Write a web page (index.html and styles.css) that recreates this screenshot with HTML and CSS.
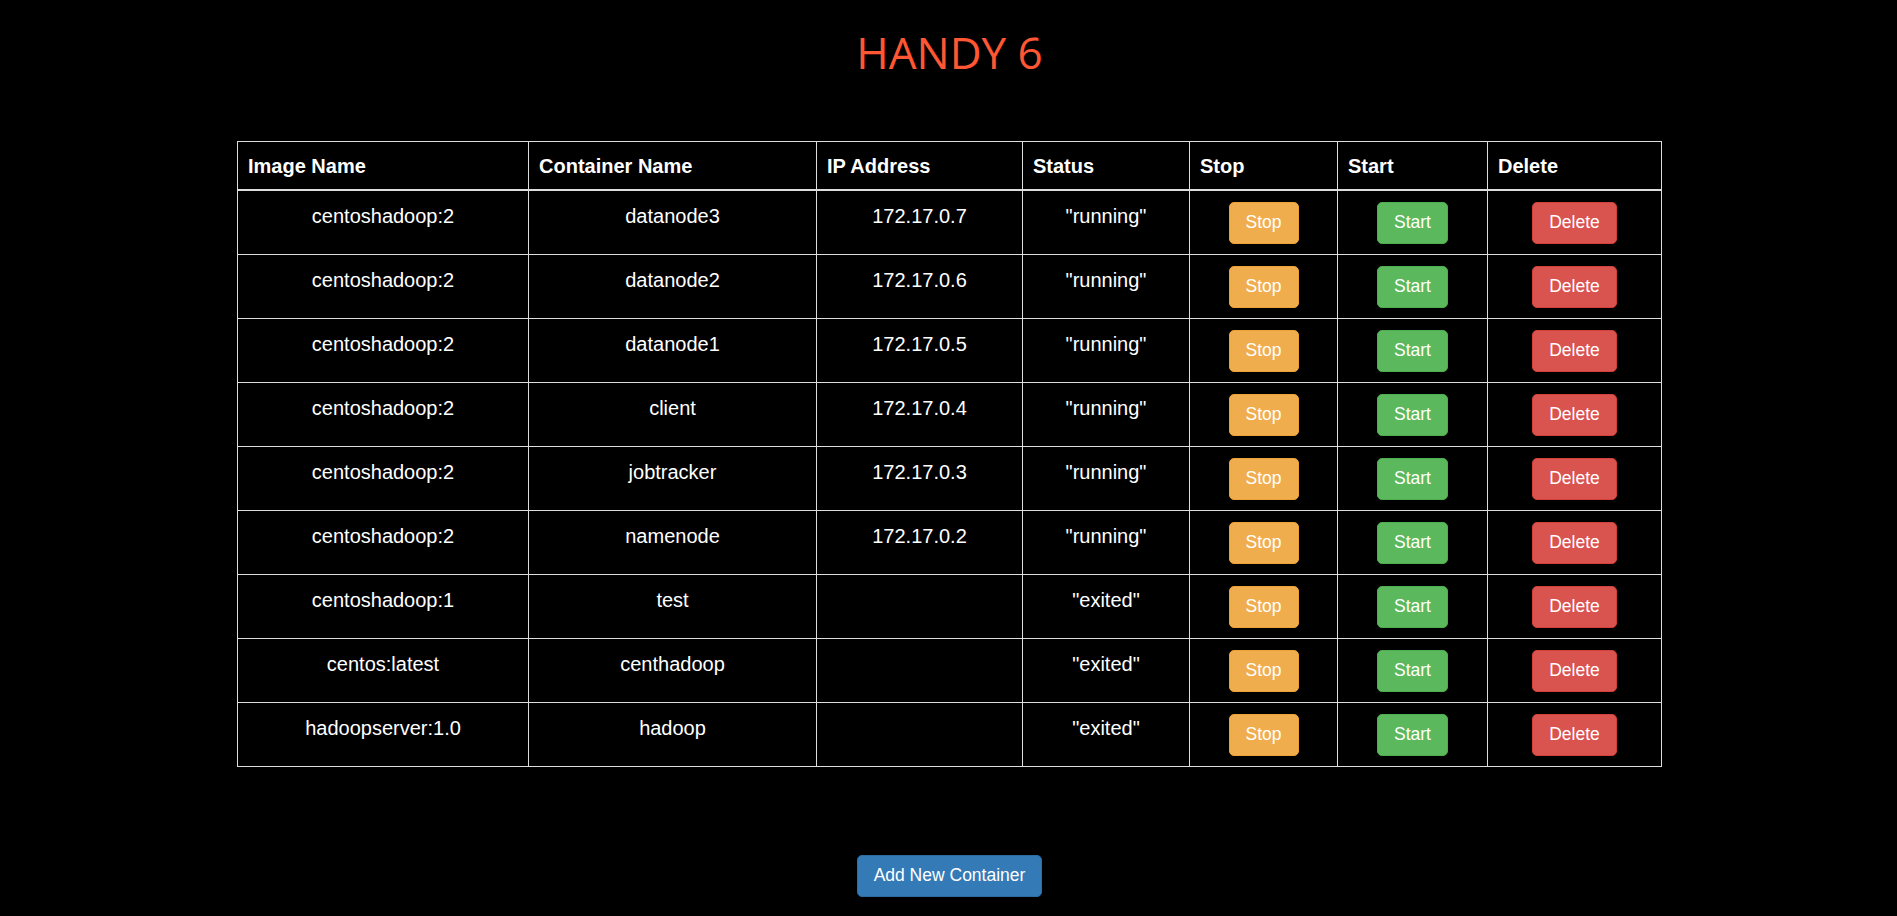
FILE: index.html
```html
<!DOCTYPE html>
<html lang="en">
<head>
<meta charset="utf-8">
<title>HANDY 6</title>
<link rel="stylesheet" href="styles.css">
</head>
<body>
<h1 class="title">HANDY 6</h1>
<table class="grid">
  <colgroup>
    <col class="c-image"><col class="c-name"><col class="c-ip"><col class="c-status"><col class="c-stop"><col class="c-start"><col class="c-delete">
  </colgroup>
  <thead>
    <tr><th>Image Name</th><th>Container Name</th><th>IP Address</th><th>Status</th><th>Stop</th><th>Start</th><th>Delete</th></tr>
  </thead>
  <tbody>
    <tr><td>centoshadoop:2</td><td>datanode3</td><td>172.17.0.7</td><td>"running"</td><td><button class="btn btn-warning">Stop</button></td><td><button class="btn btn-success">Start</button></td><td><button class="btn btn-danger">Delete</button></td></tr>
    <tr><td>centoshadoop:2</td><td>datanode2</td><td>172.17.0.6</td><td>"running"</td><td><button class="btn btn-warning">Stop</button></td><td><button class="btn btn-success">Start</button></td><td><button class="btn btn-danger">Delete</button></td></tr>
    <tr><td>centoshadoop:2</td><td>datanode1</td><td>172.17.0.5</td><td>"running"</td><td><button class="btn btn-warning">Stop</button></td><td><button class="btn btn-success">Start</button></td><td><button class="btn btn-danger">Delete</button></td></tr>
    <tr><td>centoshadoop:2</td><td>client</td><td>172.17.0.4</td><td>"running"</td><td><button class="btn btn-warning">Stop</button></td><td><button class="btn btn-success">Start</button></td><td><button class="btn btn-danger">Delete</button></td></tr>
    <tr><td>centoshadoop:2</td><td>jobtracker</td><td>172.17.0.3</td><td>"running"</td><td><button class="btn btn-warning">Stop</button></td><td><button class="btn btn-success">Start</button></td><td><button class="btn btn-danger">Delete</button></td></tr>
    <tr><td>centoshadoop:2</td><td>namenode</td><td>172.17.0.2</td><td>"running"</td><td><button class="btn btn-warning">Stop</button></td><td><button class="btn btn-success">Start</button></td><td><button class="btn btn-danger">Delete</button></td></tr>
    <tr><td>centoshadoop:1</td><td>test</td><td></td><td>"exited"</td><td><button class="btn btn-warning">Stop</button></td><td><button class="btn btn-success">Start</button></td><td><button class="btn btn-danger">Delete</button></td></tr>
    <tr><td>centos:latest</td><td>centhadoop</td><td></td><td>"exited"</td><td><button class="btn btn-warning">Stop</button></td><td><button class="btn btn-success">Start</button></td><td><button class="btn btn-danger">Delete</button></td></tr>
    <tr><td>hadoopserver:1.0</td><td>hadoop</td><td></td><td>"exited"</td><td><button class="btn btn-warning">Stop</button></td><td><button class="btn btn-success">Start</button></td><td><button class="btn btn-danger">Delete</button></td></tr>
  </tbody>
</table>
<div class="actions">
  <button class="btn btn-primary">Add New Container</button>
</div>
</body>
</html>
```
FILE: styles.css
```css
html, body {
  margin: 0;
  padding: 0;
  background: #000;
  color: #fff;
  font-family: "Liberation Sans", Arial, sans-serif;
}

body {
  padding-left: 2px;
}

.title {
  margin: 0;
  padding-top: 28px;
  text-align: center;
  font-family: "Open Sans", "Noto Sans", sans-serif;
  font-weight: 400;
  font-size: 44px;
  line-height: 48.4px;
  color: #ff5733;
}

.grid {
  width: 1424px;
  margin: 65px auto 0;
  border-collapse: collapse;
  table-layout: fixed;
  font-size: 20px;
  line-height: 28.57px;
}

.c-image { width: 291px; }
.c-name { width: 288px; }
.c-ip { width: 206px; }
.c-status { width: 167px; }
.c-stop { width: 148px; }
.c-start { width: 150px; }
.c-delete { width: 174px; }

.grid th,
.grid td {
  border: 1px solid #ddd;
  padding: 10px;
  vertical-align: top;
}

.grid th {
  text-align: left;
  font-weight: 700;
  padding-top: 10px;
  padding-bottom: 8px;
  border-bottom: 2px solid #ddd;
}

.grid td {
  text-align: center;
  padding-top: 11px;
  padding-bottom: 10px;
}

.btn {
  display: inline-block;
  margin: 0;
  padding: 7.5px 16px;
  font-family: "Liberation Sans", Arial, sans-serif;
  font-size: 17.5px;
  line-height: 25px;
  color: #fff;
  border: 1px solid transparent;
  border-radius: 5px;
  vertical-align: top;
  cursor: pointer;
}

.btn-warning { background: #f0ad4e; border-color: #eea236; }
.btn-success { background: #5cb85c; border-color: #4cae4c; }
.btn-danger { background: #d9534f; border-color: #d43f3a; }
.btn-primary { background: #337ab7; border-color: #2e6da4; }

.actions {
  margin-top: 88px;
  text-align: center;
}
```
